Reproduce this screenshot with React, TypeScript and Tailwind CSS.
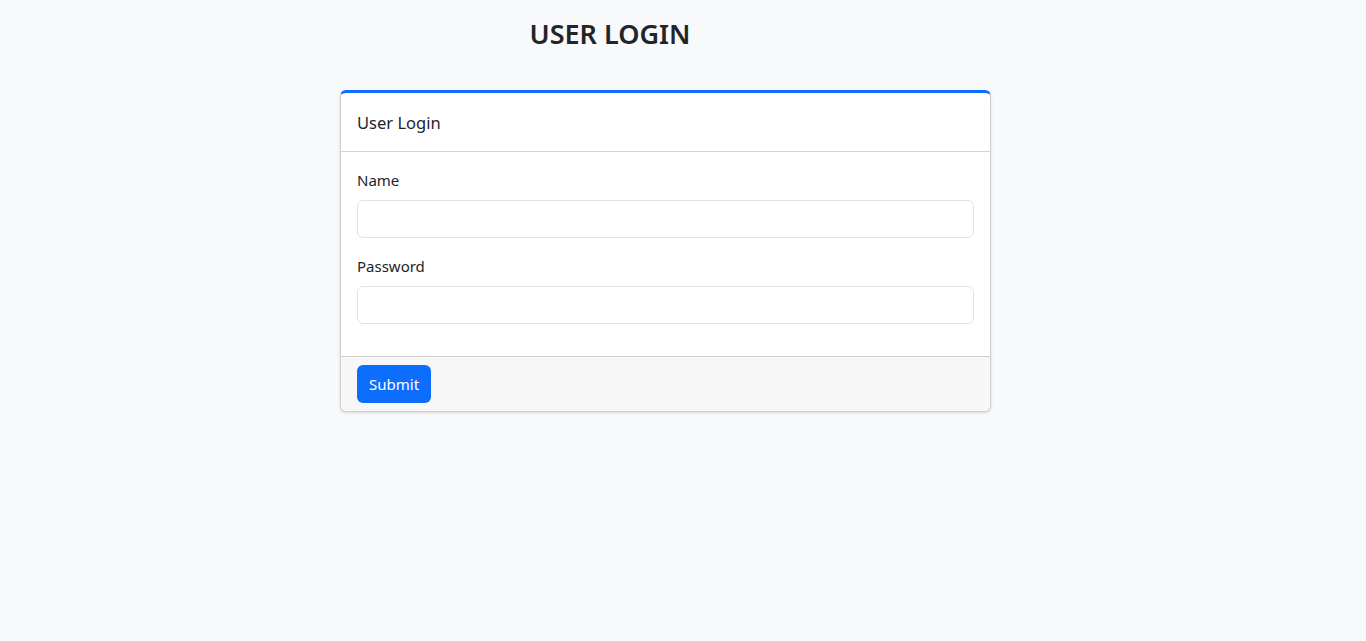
export default function App() {
  return (
    <div className="min-h-[641px] bg-[#f8f9fa] text-[#212529]" style={{ fontFamily: '"Noto Sans", "Segoe UI", sans-serif' }}>
      <div className="w-[1220px] pt-[14px] text-center">
        <h1 className="text-[27px] font-semibold leading-[40px] m-0">USER LOGIN</h1>
      </div>
      <div className="ml-[340px] mt-[36px] w-[651px] rounded-[6px] border border-[#cfcfcf] border-t-[3px] border-t-[#0d6efd] bg-white shadow-[0_1px_3px_rgba(0,0,0,0.12)] overflow-hidden">
        <div className="px-4 pt-[16px] pb-[14px] border-b border-[#d4d4d4] text-[16.5px] leading-[28px]">User Login</div>
        <div className="p-4">
          <div className="mb-4">
            <label className="block mb-2 text-[15px] leading-[24px]">Name</label>
            <input type="text" className="block w-full h-[38px] rounded-[6px] border border-[#dee2e6] px-3 outline-none bg-white" />
          </div>
          <div className="mb-4">
            <label className="block mb-2 text-[15px] leading-[24px]">Password</label>
            <input type="password" className="block w-full h-[38px] rounded-[6px] border border-[#dee2e6] px-3 outline-none bg-white" />
          </div>
        </div>
        <div className="px-4 py-2 bg-[#f7f7f7] border-t border-[#cfcfcf]">
          <button className="h-[38px] px-3 rounded-[6px] bg-[#0d6efd] text-white text-[15px] leading-[24px]">Submit</button>
        </div>
      </div>
    </div>
  );
}
